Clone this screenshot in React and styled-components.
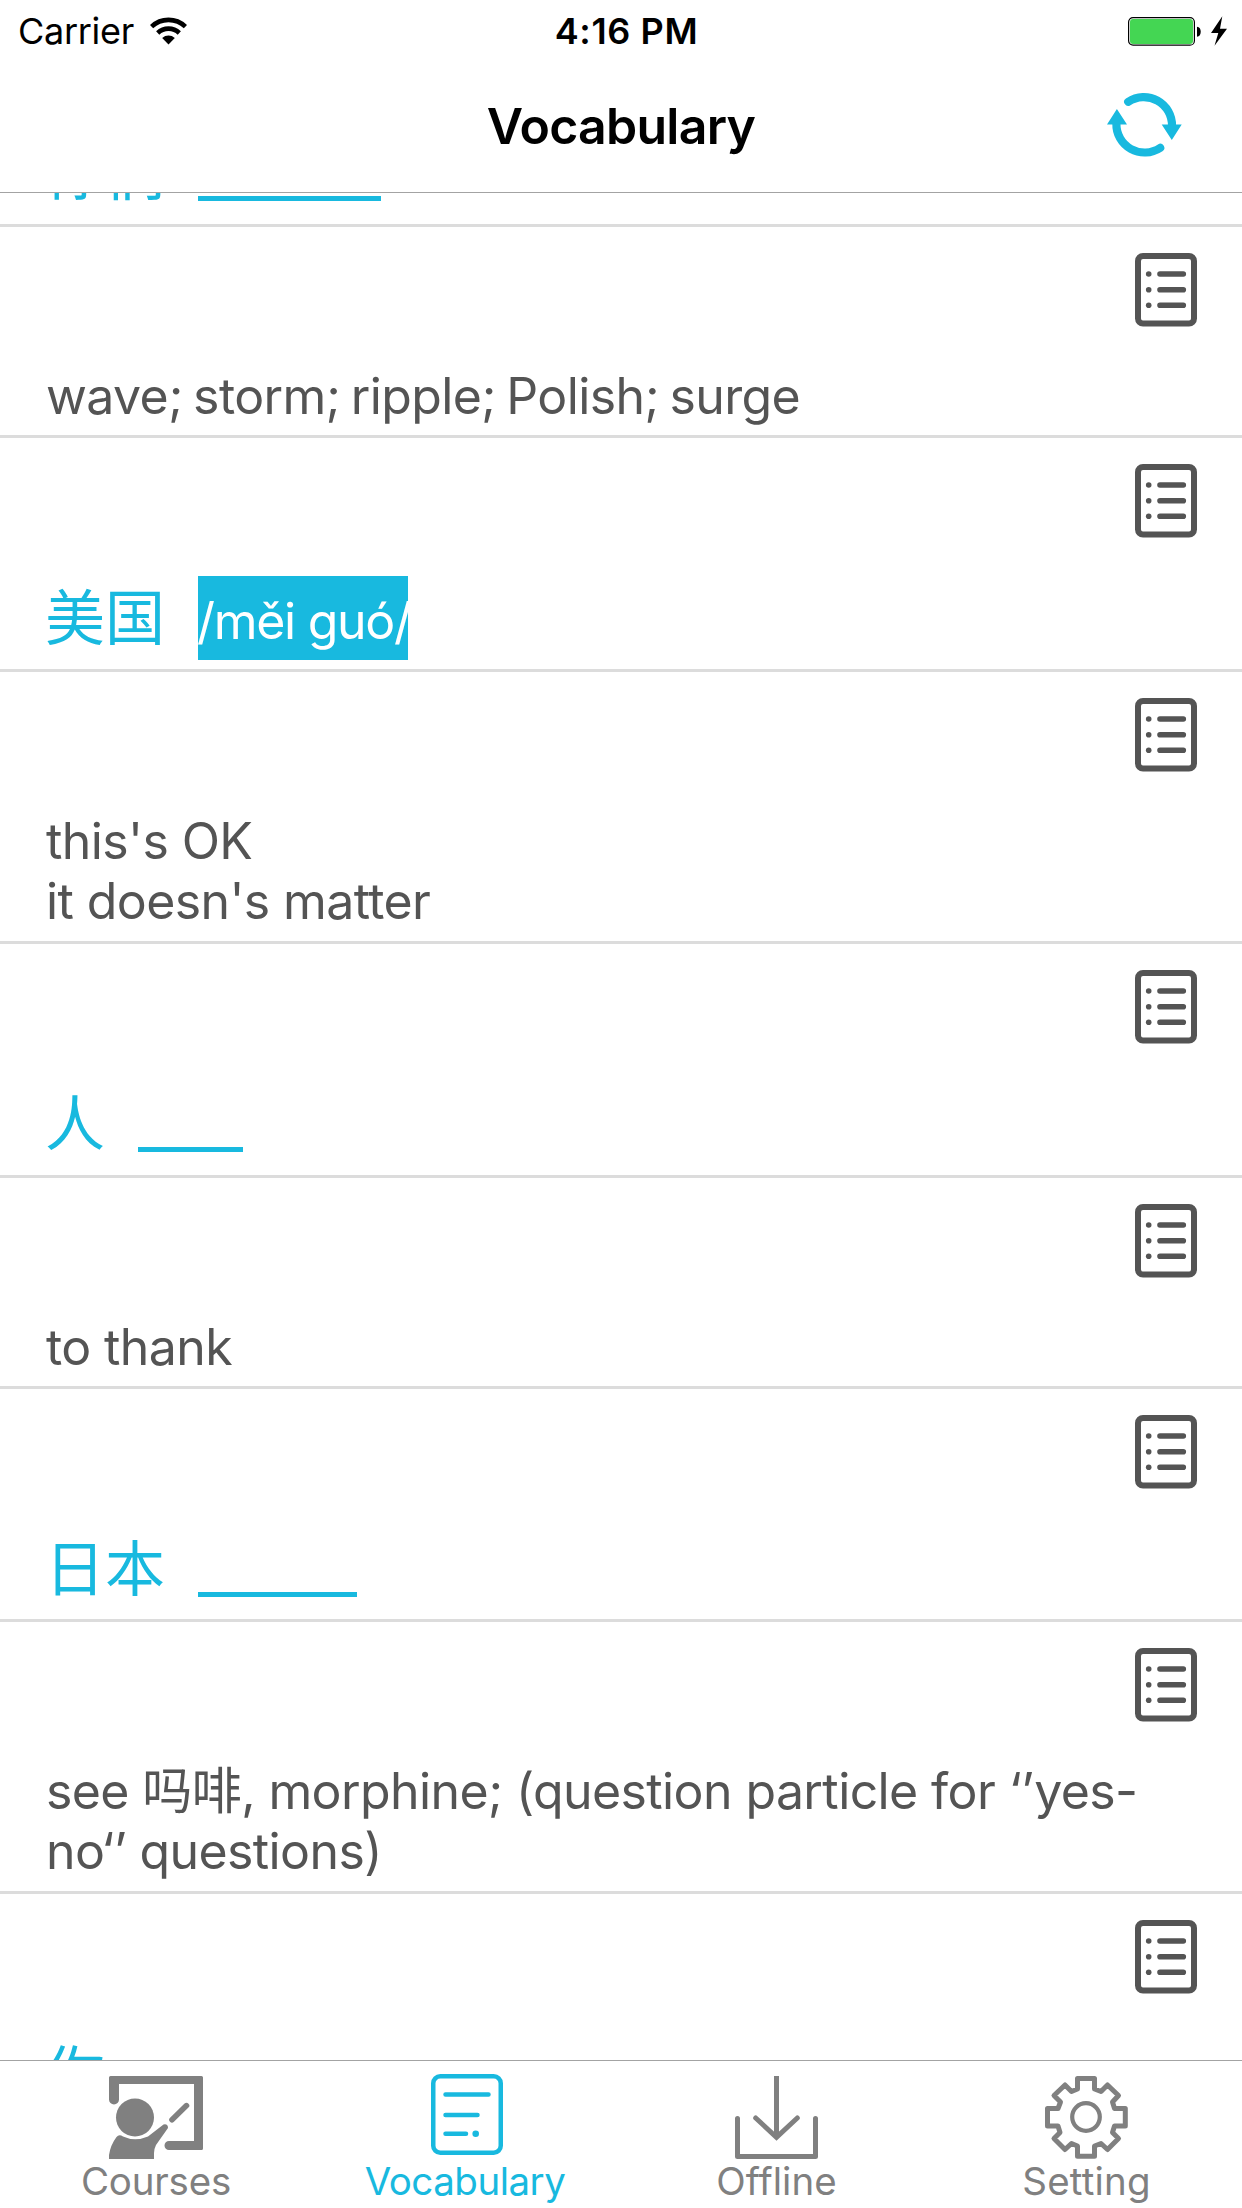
import React, { useState } from "react";
import styled, { createGlobalStyle } from "styled-components";

const cyan = "#18b9df";
const dark = "#545454";
const gray = "#808080";

const GlobalStyle = createGlobalStyle`
  body {
    margin: 0;
    background: #fff;
    font-family: Inter, "Noto Sans CJK SC", sans-serif;
    font-feature-settings: "calt" 0;
  }
`;

const Screen = styled.div`
  width: 1242px;
  height: 2208px;
  display: flex;
  flex-direction: column;
  overflow: hidden;
  background: #fff;
`;

const Header = styled.header`
  height: 193px;
  flex: none;
  box-sizing: border-box;
  border-bottom: 1px solid #a3a3a3;
`;

const StatusBar = styled.div`
  height: 60px;
  padding: 0 15px 0 18px;
  display: grid;
  grid-template-columns: 1fr auto 1fr;
  align-items: center;
  font-size: 36px;
  line-height: 62px;
`;

const Carrier = styled.div`
  display: flex;
  align-items: center;
  gap: 16px;
  letter-spacing: -0.3px;
`;

const Time = styled.div`
  padding-left: 8px;
  font-weight: 600;
  letter-spacing: 0.6px;
`;

const Power = styled.div`
  display: flex;
  align-items: center;
  justify-content: flex-end;
`;

const NavBar = styled.div`
  height: 132px;
  padding: 0 60px;
  display: grid;
  grid-template-columns: 1fr auto 1fr;
  align-items: center;
`;

const Title = styled.h1`
  grid-column: 2;
  margin: 0;
  font-size: 50px;
  font-weight: 600;
  line-height: 132px;
  letter-spacing: -0.75px;
`;

const RefreshButton = styled.button`
  justify-self: end;
  padding: 0 0 3px;
  border: 0;
  background: none;
  display: flex;
`;

const List = styled.main`
  flex: 1;
  min-height: 0;
  overflow: hidden;
`;

// the list is scrolled down so the first row is cut by the header
const Rows = styled.div`
  margin-top: -200px;
`;

const Row = styled.section`
  padding: 26px 45px 9px;
  display: flex;
  flex-direction: column;
  gap: 38px;
  border-bottom: 3px solid #dcdcdc;
`;

const DetailIcon = styled.svg`
  align-self: flex-end;
  display: block;
`;

const Definition = styled.p`
  box-sizing: border-box;
  height: ${(props) => props.$height || 61}px;
  margin: 0;
  padding: 1px 0 0 1px;
  color: ${dark};
  font-size: 50px;
  line-height: 60px;
  letter-spacing: -0.6px;
  word-spacing: ${(props) => props.$wordSpacing || 0}px;
  white-space: pre-line;
`;

const Word = styled.div`
  height: ${(props) => props.$height || 84}px;
  display: flex;
  gap: 33px;
  color: ${cyan};
`;

const Hanzi = styled.span`
  font-family: "Noto Sans CJK SC", sans-serif;
  font-size: 60px;
  line-height: 76px;
`;

const Pinyin = styled.span`
  width: 210px;
  height: 84px;
  line-height: 91px;
  font-size: 50px;
  letter-spacing: -1.3px;
  text-indent: -1px;
  white-space: nowrap;
  color: #fff;
  background: ${cyan};
`;

const Blank = styled.span`
  box-sizing: border-box;
  width: ${(props) => props.$width}px;
  height: 70px;
  border-bottom: 5px solid ${cyan};
`;

const TabBar = styled.nav`
  height: 148px;
  flex: none;
  box-sizing: border-box;
  display: grid;
  grid-template-columns: 312px 310px 309px 311px;
  border-top: 1px solid #a3a3a3;
`;

const Tab = styled.button`
  padding: 13px 0 0;
  border: 0;
  background: none;
  display: flex;
  flex-direction: column;
  align-items: center;
  font-family: inherit;
  font-size: 38.5px;
  line-height: 41px;
  color: ${(props) => (props.$active ? cyan : gray)};
`;

const TabIcon = styled.svg`
  height: 87px;
  display: block;
`;

const TabLabel = styled.span`
  padding-right: ${(props) => props.$trim || 0}px;
  letter-spacing: ${(props) => props.$spacing}px;
`;

const rows = [
  { hanzi: "你们", blank: 183 },
  { text: "wave; storm; ripple; Polish; surge", wordSpacing: -3 },
  { hanzi: "美国", pinyin: "/měi guó/" },
  { text: "this's OK\nit doesn's matter", height: 122 },
  { hanzi: "人", blank: 105 },
  { text: "to thank" },
  { hanzi: "日本", blank: 159, height: 83 },
  { text: "see 吗啡, morphine; (question particle for ‘’yes-no‘’ questions)", height: 122 },
  { hanzi: "你", blank: 105 },
];

function WifiIcon() {
  return (
    <svg width="37" height="28" viewBox="0 0 37 28">
      <g fill="none" stroke="#000" strokeWidth="4.6">
        <path d="M1.6 9.6A24.5 24.5 0 0 1 35.4 9.6" />
        <path d="M7.7 16A15.6 15.6 0 0 1 29.3 16" />
      </g>
      <path d="M12.2 20.9A9.2 9.2 0 0 1 24.8 20.9L18.5 27.4Z" />
    </svg>
  );
}

function BatteryIcon() {
  return (
    <svg width="99" height="31" viewBox="0 0 99 31">
      <rect x="0.6" y="1.6" width="65.8" height="27.6" rx="4.5" fill="#fff" stroke="#000" strokeWidth="1.2" />
      <rect x="2" y="3" width="63" height="25" rx="3" fill="#44d653" />
      <path d="M69 10.8c5 0 5 10 0 10z" />
      <path d="M94.3 0.3L83 17h7.3L86.5 29.7 99 12.7h-7z" />
    </svg>
  );
}

function RefreshIcon() {
  return (
    <svg width="75" height="66" viewBox="0 0 75 66">
      <g fill="none" stroke={cyan} strokeWidth="8.2" strokeLinecap="round">
        <path d="M21.2 9.8A28.2 28.2 0 0 1 65 34" />
        <path d="M53.2 55.8A28.2 28.2 0 0 1 9.4 31.5" />
      </g>
      <path fill={cyan} d="M54.7 32.5h20L64.8 48zM0 32.5h20L9.9 17z" />
    </svg>
  );
}

function ListIcon() {
  return (
    <DetailIcon width="62" height="74" viewBox="0 0 62 74">
      <rect x="3" y="3" width="56" height="67.5" rx="5" fill="none" stroke={dark} strokeWidth="6" />
      <path d="M25 21h23.300M25 36.700h23.300M25 52.300h23.300" stroke={dark} strokeWidth="5.600" strokeLinecap="round" />
      <circle cx="13.7" cy="21" r="2.8" fill={dark} />
      <circle cx="13.7" cy="36.7" r="2.8" fill={dark} />
      <circle cx="13.7" cy="52.3" r="2.8" fill={dark} />
    </DetailIcon>
  );
}

function CoursesIcon() {
  return (
    <TabIcon width="94" viewBox="0 -2 94 87" fill={gray}>
      <path d="M0 1.5Q0 0 1.5 0H92.5Q94 0 94 1.5V72.5Q94 74 92.5 74H60a4.5 4.5 0 0 1 0-9H85V8H10V23.5a5 5 0 0 1-10 0z" />
      <circle cx="26" cy="41.5" r="19" />
      <path d="M0 83V79Q1.5 69 7.5 61 10 58 14 60.5 26 66 39 60.5L54.5 48.5Q59 47.5 59 52L47 69Q45 73 45 77V83z" />
      <path d="M63 43.7L77.5 29.6" stroke={gray} strokeWidth="5.6" strokeLinecap="round" />
    </TabIcon>
  );
}

function VocabularyIcon() {
  return (
    <TabIcon width="72" viewBox="0 0 72 87" fill="none" stroke={cyan} strokeWidth="4.5" strokeLinecap="round">
      <rect x="2.25" y="2.25" width="67.5" height="76.5" rx="7" />
      <path d="M14.5 20.5h43M14.5 41h32M14.5 59.7h20.5" />
      <circle cx="44.7" cy="59.7" r="3.3" fill={cyan} stroke="none" />
    </TabIcon>
  );
}

function OfflineIcon() {
  return (
    <TabIcon width="83" viewBox="0 -2 83 87" fill="none" stroke={gray} strokeWidth="5" strokeLinecap="round">
      <path d="M2.5 42.5V80.5H80.5V42.5" strokeLinejoin="round" />
      <path d="M41.5 0V60" strokeLinecap="butt" />
      <path d="M20.7 42L41.5 61.3 62.3 42" />
    </TabIcon>
  );
}

function SettingIcon() {
  return (
    <TabIcon width="83" viewBox="0 -2 83 87" fill="none" stroke={gray} strokeWidth="5">
      <path
        strokeLinejoin="round"
        d="M32.5 2.5H49.5V13L56 15.5 62.5 9 73.5 19.5 67.5 26 69.5 32.5H80.3V50H69.5L67.5 56.5 73.5 62.5 62.5 73.5 56 67.5 49.5 70V80.3H32.5V70L26.5 67.5 20 73.5 9 62.5 15 56.5 13 50H2.5V32.5H13L15.5 26 9 19.5 20 9 26.5 15.5 32.5 13Z"
      />
      <circle cx="41" cy="41" r="13.8" strokeWidth="4.2" />
    </TabIcon>
  );
}

const tabs = [
  { name: "Courses", icon: CoursesIcon, spacing: -0.2 },
  { name: "Vocabulary", icon: VocabularyIcon, spacing: -0.5, trim: 4 },
  { name: "Offline", icon: OfflineIcon, spacing: 0 },
  { name: "Setting", icon: SettingIcon, spacing: 0.2 },
];

export default function App() {
  const [active, setActive] = useState("Vocabulary");

  return (
    <Screen>
      <GlobalStyle />
      <Header>
        <StatusBar>
          <Carrier>
            Carrier
            <WifiIcon />
          </Carrier>
          <Time>4:16 PM</Time>
          <Power>
            <BatteryIcon />
          </Power>
        </StatusBar>
        <NavBar>
          <Title>Vocabulary</Title>
          <RefreshButton>
            <RefreshIcon />
          </RefreshButton>
        </NavBar>
      </Header>
      <List>
        <Rows>
          {rows.map((row, i) => (
            <Row key={i}>
              <ListIcon />
              {row.text ? (
                <Definition $height={row.height} $wordSpacing={row.wordSpacing}>
                  {row.text}
                </Definition>
              ) : (
                <Word $height={row.height}>
                  <Hanzi>{row.hanzi}</Hanzi>
                  {row.pinyin ? <Pinyin>{row.pinyin}</Pinyin> : <Blank $width={row.blank} />}
                </Word>
              )}
            </Row>
          ))}
        </Rows>
      </List>
      <TabBar>
        {tabs.map(({ name, icon: Icon, spacing, trim }) => (
          <Tab key={name} $active={name === active} onClick={() => setActive(name)}>
            <Icon />
            <TabLabel $spacing={spacing} $trim={trim}>
              {name}
            </TabLabel>
          </Tab>
        ))}
      </TabBar>
    </Screen>
  );
}
